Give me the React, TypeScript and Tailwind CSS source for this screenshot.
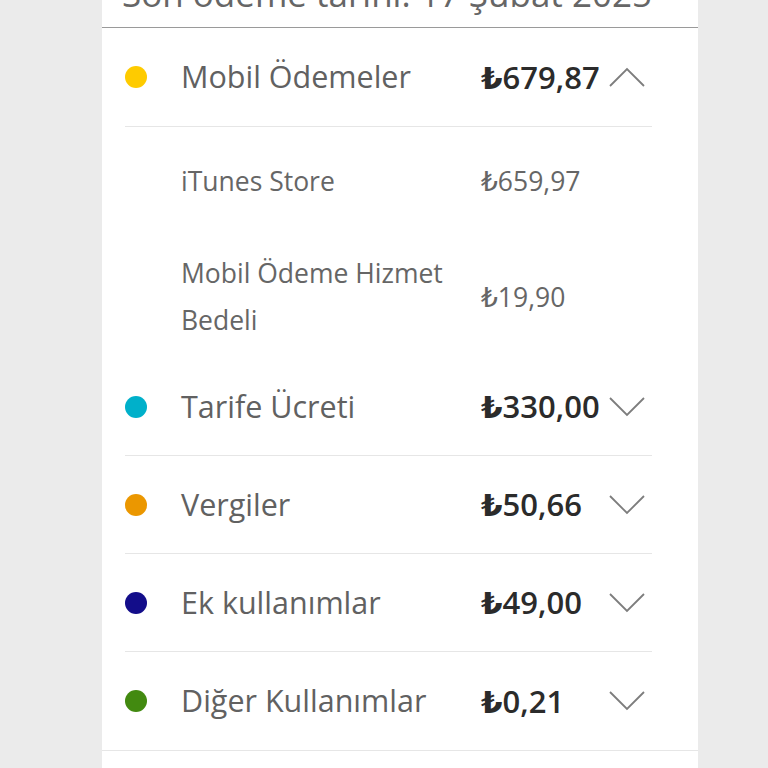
const font = { fontFamily: '"Open Sans", "DejaVu Sans", sans-serif' };

const items = [
  { label: 'Tarife Ücreti', amount: '₺330,00', color: 'bg-[#00b0ca]' },
  { label: 'Vergiler', amount: '₺50,66', color: 'bg-[#eb9700]' },
  { label: 'Ek kullanımlar', amount: '₺49,00', color: 'bg-[#130d8a]' },
  { label: 'Diğer Kullanımlar', amount: '₺0,21', color: 'bg-[#428a10]' },
];

function Chevron({ up }: { up?: boolean }) {
  return (
    <svg width="38" height="20" viewBox="0 0 38 20" className="mr-[6px] shrink-0" fill="none">
      <polyline
        points={up ? '2,19 19,2 36,19' : '2,1 19,18 36,1'}
        stroke="#7d7d7d"
        strokeWidth="1.8"
      />
    </svg>
  );
}

function Row({
  label,
  amount,
  color,
  open,
  last,
}: {
  label: string;
  amount: string;
  color: string;
  open?: boolean;
  last?: boolean;
}) {
  return (
    <div className={last ? 'border-b border-[#e6e6e6]' : ''}>
      <div
        className={`ml-[23px] mr-[46px] flex items-center ${open ? 'h-[99px]' : 'h-[98px]'} ${
          last ? '' : 'border-b border-[#e6e6e6]'
        }`}
      >
        <span className={`h-[22px] w-[22px] shrink-0 rounded-full ${color}`} />
        <span className="ml-[34px] w-[300px] text-[30.5px] text-[#616161]">{label}</span>
        <span className="flex-1 text-[31px] font-semibold text-[#2b2b2b]">{amount}</span>
        <Chevron up={open} />
      </div>
    </div>
  );
}

export default function App() {
  return (
    <div className="min-h-screen bg-[#ebebeb]" style={font}>
      <div className="ml-[102px] min-h-screen w-[596px] bg-white">
        <div className="h-[28px] overflow-hidden border-b border-[#9a9a9a] px-[20px]">
          <p className="-mt-[26px] whitespace-nowrap text-[35px] leading-[40px] text-[#666666]">
            Son ödeme tarihi: 17 Şubat 2025
          </p>
        </div>

        <Row label="Mobil Ödemeler" amount="₺679,87" color="bg-[#fecb00]" open />

        <div className="ml-[23px] mr-[46px] pb-[14px] pl-[56px] pt-[31px] text-[26.5px] leading-[47px] text-[#666666]">
          <div className="flex items-center">
            <span className="w-[300px]">iTunes Store</span>
            <span>₺659,97</span>
          </div>
          <div className="mt-[45px] flex items-center">
            <span className="w-[300px]">
              Mobil Ödeme Hizmet
              <br />
              Bedeli
            </span>
            <span>₺19,90</span>
          </div>
        </div>

        {items.map((it, i) => (
          <Row key={it.label} {...it} last={i === items.length - 1} />
        ))}
      </div>
    </div>
  );
}
